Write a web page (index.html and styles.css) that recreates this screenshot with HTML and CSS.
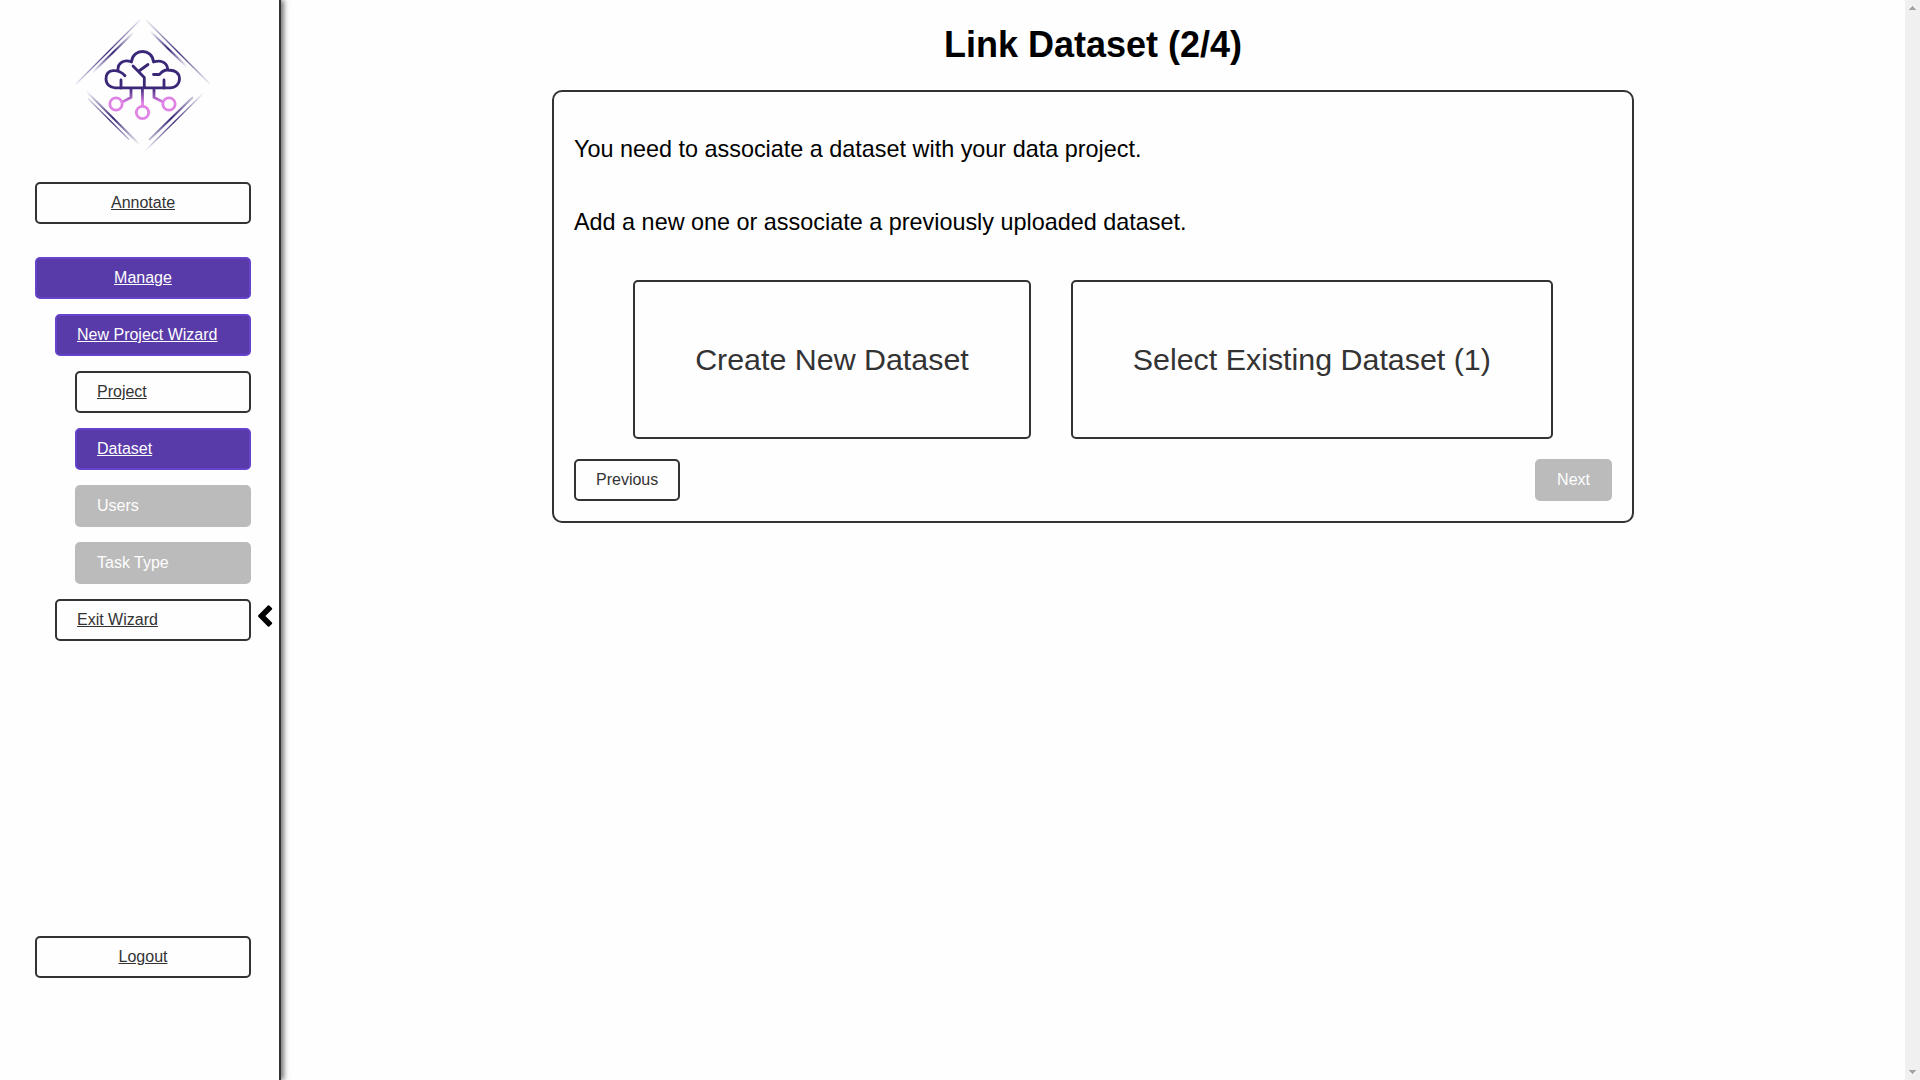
FILE: index.html
```html
<!DOCTYPE html>
<html lang="en">
<head>
<meta charset="utf-8">
<title>Link Dataset</title>
<link rel="stylesheet" href="styles.css">
</head>
<body>
<nav class="sidebar">
  <div class="menu">
    <svg class="logo" viewBox="60 10 160 150" width="160" height="150" fill="none">
      <defs>
        <linearGradient id="up" gradientUnits="userSpaceOnUse" x1="76" y1="84" x2="140" y2="20"><stop offset="0" stop-color="#3b2778" stop-opacity=".1"/><stop offset=".5" stop-color="#3b2778"/><stop offset="1" stop-color="#3b2778" stop-opacity=".1"/></linearGradient>
        <linearGradient id="upInner" gradientUnits="userSpaceOnUse" x1="92" y1="73" x2="134" y2="32"><stop offset="0" stop-color="#3b2778" stop-opacity="0"/><stop offset=".5" stop-color="#3b2778"/><stop offset="1" stop-color="#3b2778" stop-opacity="0"/></linearGradient>
        <linearGradient id="down" gradientUnits="userSpaceOnUse" x1="147" y1="21" x2="209" y2="83"><stop offset="0" stop-color="#3b2778" stop-opacity=".1"/><stop offset=".5" stop-color="#3b2778"/><stop offset="1" stop-color="#3b2778" stop-opacity=".1"/></linearGradient>
        <linearGradient id="downInner" gradientUnits="userSpaceOnUse" x1="150" y1="31" x2="187" y2="67"><stop offset="0" stop-color="#3b2778" stop-opacity="0"/><stop offset=".5" stop-color="#3b2778"/><stop offset="1" stop-color="#3b2778" stop-opacity="0"/></linearGradient>
        <linearGradient id="downLeft" gradientUnits="userSpaceOnUse" x1="86" y1="91" x2="140" y2="145"><stop offset="0" stop-color="#3b2778" stop-opacity="0"/><stop offset=".5" stop-color="#3b2778"/><stop offset="1" stop-color="#3b2778" stop-opacity="0"/></linearGradient>
        <linearGradient id="upRight" gradientUnits="userSpaceOnUse" x1="144" y1="151" x2="204" y2="92"><stop offset="0" stop-color="#3b2778" stop-opacity="0"/><stop offset=".5" stop-color="#3b2778"/><stop offset="1" stop-color="#3b2778" stop-opacity="0"/></linearGradient>
        <linearGradient id="stem" gradientUnits="userSpaceOnUse" x1="0" y1="88" x2="0" y2="103"><stop offset="0" stop-color="#3b2778"/><stop offset="1" stop-color="#df83e5"/></linearGradient>
      </defs>
      <path stroke="url(#up)" stroke-width="1.2" d="M76 84 140 20"/>
      <path stroke="url(#upInner)" stroke-width="2" d="M92 73 134 32"/>
      <path stroke="url(#down)" stroke-width="1.2" d="M146 20 210 84"/>
      <path stroke="url(#downInner)" stroke-width="2" d="M150 31 187 67"/>
      <path stroke="url(#downLeft)" stroke-width="2" d="M86 91 141 146"/>
      <path stroke="url(#downLeft)" stroke-width="1.2" d="M88 98.500 129 139.500"/>
      <path stroke="url(#upRight)" stroke-width="1.2" d="M144 152 204 92.500"/>
      <path stroke="url(#upRight)" stroke-width="2" d="M149 140 193 97"/>
      <g stroke="#3b2778" stroke-width="2.8" stroke-linecap="round" stroke-linejoin="round">
        <path d="M125 75.800C119 69 106 68 106 79c0 5.200 4 8.800 9 8.800h55c5.500 0 9.500-4 9.500-9 0-6-5-9-10.500-8.500"/>
        <path d="M118 70c-.5-7 6-11 13.500-8 1-14 21-14 22 0 9-3 14.500 2 14 8-3.500 0-6 2-8 4.500h-6"/>
        <path d="M133 66l11.300 11.500v10M139 71l9-6.500M121 80v8M164 80v8"/>
      </g>
      <g stroke="url(#stem)" stroke-width="2.800">
        <path d="M131 88v9.500l-9.500 5M142.400 88l.2 18.500M154 88v9.500l10 5"/>
      </g>
      <g stroke="#df83e5" stroke-width="2.800"><circle cx="116" cy="104" r="6.200"/><circle cx="142.500" cy="112.500" r="6.200"/><circle cx="169" cy="104" r="6.200"/></g>
    </svg>
    <a class="btn top" href="#">Annotate</a>
    <a class="btn top active manage" href="#">Manage</a>
    <a class="btn sub active" href="#">New Project Wizard</a>
    <a class="btn step" href="#">Project</a>
    <a class="btn step active" href="#">Dataset</a>
    <span class="btn step disabled">Users</span>
    <span class="btn step disabled">Task Type</span>
    <a class="btn sub" href="#">Exit Wizard</a>
    <a class="btn top logout" href="#">Logout</a>
  </div>
  <svg class="collapse" width="16" height="24" viewBox="0 0 16 24"><path d="M2 12 11.600 2.200 14.200 4.800 7 12l7.200 7.200-2.600 2.600z" stroke="#000" stroke-width="2" stroke-linejoin="round"/></svg>
</nav>
<main class="main">
  <h1 class="title">Link Dataset (2/4)</h1>
  <section class="card">
    <p class="text">You need to associate a dataset with your data project.</p>
    <p class="text">Add a new one or associate a previously uploaded dataset.</p>
    <div class="choices">
      <button class="choice">Create New Dataset</button>
      <button class="choice">Select Existing Dataset (1)</button>
    </div>
    <div class="actions">
      <button class="btn">Previous</button>
      <button class="btn disabled">Next</button>
    </div>
  </section>
</main>
<div class="scrollbar">
  <svg width="7" height="4" viewBox="0 0 7 4" shape-rendering="crispEdges"><path fill="#a3a3a3" d="M3 0h1v1h1v1h1v1h1v1H0V3h1V2h1V1h1z"/></svg>
  <svg width="7" height="4" viewBox="0 0 7 4" shape-rendering="crispEdges"><path fill="#a3a3a3" d="M0 0h7v1H6v1H5v1H4v1H3V3H2V2H1V1H0z"/></svg>
</div>
</body>
</html>
```
FILE: styles.css
```css
* { box-sizing: border-box; }
body {
  margin: 0;
  height: 1080px;
  display: flex;
  overflow: hidden;
  background: #fefefe;
  font-family: "Liberation Sans", Arial, sans-serif;
  color: #000;
}
.sidebar {
  width: 281px;
  flex: none;
  display: flex;
  align-items: flex-start;
  border-right: 2px solid #333;
  box-shadow: 3px 0 5px #7c7878;
}
.menu {
  width: 251px;
  height: 978px;
  padding-top: 10px;
  display: flex;
  flex-direction: column;
}
.logo { flex: none; margin: 0 0 22px 60px; }
.btn {
  height: 42px;
  flex: none;
  padding: 0 20px;
  border: 2px solid #333;
  border-radius: 5px;
  background: #fefefe;
  color: #333;
  font: 16px/38px "Liberation Sans", Arial, sans-serif;
}
.menu .btn { margin-top: 15px; }
.menu .top { margin-left: 35px; text-align: center; }
.menu .top:first-of-type { margin-top: 0; }
.menu .manage { margin-top: 33px; }
.menu .sub { margin-left: 55px; }
.menu .step { margin-left: 75px; }
.menu .logout { margin-top: auto; }
.active { background: #583aa8; border-color: #6543cb; color: #fefefe; }
.disabled { background: #bbb; border-color: #bbb; color: #fefefe; }
.collapse { margin: 604px 0 0 6px; }
.main {
  flex: 1;
  display: flex;
  flex-direction: column;
  align-items: center;
}
.title { margin: 24px 0 25px; font-size: 36px; line-height: 41px; }
.card {
  width: 1082px;
  height: 433px;
  padding: 20px;
  border: 2px solid #333;
  border-radius: 10px;
}
.text { margin: 24px 0 46px; font-size: 23.4px; line-height: 27px; }
.text + .text { margin: 0 0 44px; }
.choices { display: flex; justify-content: center; gap: 40px; }
.choice {
  height: 159px;
  padding: 0 60px;
  border: 2px solid #333;
  border-radius: 5px;
  background: #fefefe;
  color: #333;
  font: 30.4px/35px "Liberation Sans", Arial, sans-serif;
}
.actions { display: flex; justify-content: space-between; margin-top: 20px; }
.scrollbar {
  width: 15px;
  flex: none;
  padding: 6px 4px;
  display: flex;
  flex-direction: column;
  justify-content: space-between;
  background: #f0f0f0;
}
```
